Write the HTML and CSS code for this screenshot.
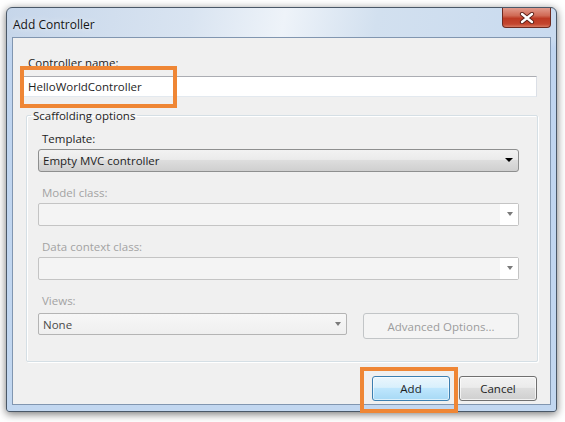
FILE: index.html
```html
<!DOCTYPE html>
<html lang="en">

<head>
    <meta charset="UTF-8">
    <meta name="viewport" content="width=device-width, initial-scale=1.0">
    <title>Add Controller</title>
    <link rel="stylesheet" href="styles.css">
</head>

<body>
    <div class="window">
        <div class="titlebar">
            <span class="title">Add Controller</span>
            <div class="close-btn">
                <svg width="16" height="12" viewBox="0 0 16 12">
                    <path d="M3 2 L13 10 M13 2 L3 10" stroke="#5a1e16" stroke-width="4.2" stroke-linecap="round" fill="none" />
                    <path d="M3 2 L13 10 M13 2 L3 10" stroke="#fff" stroke-width="2.4" stroke-linecap="round" fill="none" />
                </svg>
            </div>
        </div>

        <div class="client">
            <label class="name-label">Controller name:</label>
            <div class="textbox">HelloWorldController</div>

            <fieldset class="group">
                <legend>Scaffolding options</legend>

                <div class="field">
                    <label>Template:</label>
                    <div class="combo">Empty MVC controller<span class="arrow"></span></div>
                </div>

                <div class="field">
                    <label class="disabled">Model class:</label>
                    <div class="combo off"><span class="drop"><span class="arrow"></span></span></div>
                </div>

                <div class="field">
                    <label class="disabled">Data context class:</label>
                    <div class="combo off"><span class="drop"><span class="arrow"></span></span></div>
                </div>

                <div class="field">
                    <label class="disabled">Views:</label>
                    <div class="views-row">
                        <div class="combo views">None<span class="arrow"></span></div>
                        <div class="btn btn-off">Advanced Options...</div>
                    </div>
                </div>
            </fieldset>

            <div class="buttons">
                <div class="btn btn-default">Add</div>
                <div class="btn">Cancel</div>
            </div>
        </div>

        <!-- orange callouts -->
        <span class="callout callout-name"></span>
        <span class="callout callout-add"></span>
    </div>
</body>

</html>
```

FILE: styles.css
```css
body {
    background-color: #fff;
    font-family: "Open Sans", "Noto Sans", Arial, sans-serif;
    font-size: 11.5px;
    color: #1e1e1e;
    margin: 0;
    height: 422px;
}

.window {
    position: relative;
    margin: 7px 0 0 6px;
    width: 551px;
    padding: 0 5px 6px 5px;
    box-sizing: border-box;
    border: 1px solid #4a5868;
    border-radius: 6px 6px 3px 3px;
    background:
        linear-gradient(rgba(255, 255, 255, 0) 0%, rgba(255, 255, 255, 0) 8%, rgba(190, 212, 240, 0.9) 10%, #c2d7f0 100%),
        linear-gradient(100deg, #c6d6ea 0%, #d9e4f1 30%, #eef3f9 45%, #d2e0ef 60%, #c5d8ef 100%);
    box-shadow: 0 2px 8px rgba(0, 0, 0, 0.55);
}

.titlebar {
    height: 29px;
    display: flex;
    justify-content: space-between;
    align-items: flex-start;
}

.title {
    margin: 8px 0 0 1px;
    font-size: 12px;
    color: #151515;
    text-shadow: 0 0 6px rgba(255, 255, 255, 0.9);
}

.close-btn {
    width: 49px;
    height: 20px;
    box-sizing: border-box;
    border: 1px solid #6e2a20;
    border-top: none;
    border-radius: 0 0 4px 4px;
    background: linear-gradient(#e29a8c 0%, #d06a55 40%, #bd3a24 55%, #c4462f 85%, #d77a62 100%);
    display: flex;
    align-items: center;
    justify-content: center;
}

.client {
    background-color: #f0f0f0;
    border: 1px solid #8196b0;
    padding: 17px 13px 3px 10px;
}

.name-label {
    display: block;
    line-height: 15px;
    padding-left: 5px;
    margin-bottom: 6px;
}

.textbox {
    height: 21px;
    box-sizing: border-box;
    background-color: #fff;
    border: 1px solid #abadb3;
    border-left-color: #e2e3ea;
    border-right-color: #dbdfe6;
    border-bottom-color: #e3e9ef;
    padding: 2px 4px;
    line-height: 15px;
}

.group {
    margin: 11px 0 0 3px;
    padding: 8px 18px 22px 11px;
    border: 1px solid #d5dfe5;
    box-shadow: inset 1px 1px 0 #fff, 1px 1px 0 #fff;
    border-radius: 2px;
}

.group legend {
    margin-left: -7px;
    padding: 0 2px;
    line-height: 15px;
}

.field label {
    display: block;
    line-height: 15px;
    padding-left: 4px;
    margin-bottom: 3px;
}

.field + .field {
    margin-top: 13px;
}

label.disabled {
    color: #a3a3a3;
}

.combo {
    position: relative;
    height: 23px;
    box-sizing: border-box;
    border: 1px solid #8e8f8f;
    border-radius: 3px;
    background: linear-gradient(#f2f2f2 0%, #ebebeb 45%, #dddddd 50%, #cfcfcf 100%);
    padding: 3px 4px;
    line-height: 15px;
}

.arrow {
    position: absolute;
    right: 5px;
    top: 8px;
    width: 0;
    height: 0;
    border-left: 4px solid transparent;
    border-right: 4px solid transparent;
    border-top: 4px solid #000;
}

.combo.off {
    border-color: #c4c4c4;
    border-radius: 2px;
    background: #f4f4f4;
}

.drop {
    position: absolute;
    right: 0;
    top: 0;
    bottom: 0;
    width: 18px;
    background-color: #fff;
}

.drop .arrow,
.views .arrow {
    border-top-color: #7a7a7a;
    border-left-width: 3.5px;
    border-right-width: 3.5px;
    top: 8px;
}

.views-row {
    display: flex;
    align-items: flex-start;
    gap: 16px;
    margin-top: 5px;
}

.combo.views {
    width: 309px;
    height: 22px;
    border-color: #b4b4b4;
    border-radius: 2px;
    background: linear-gradient(#f7f7f7, #efefef);
    color: #4a4a4a;
}

.btn {
    height: 25px;
    width: 78px;
    box-sizing: border-box;
    border: 1px solid #707070;
    border-radius: 3px;
    background: linear-gradient(#f2f2f2 0%, #ebebeb 45%, #dddddd 50%, #cfcfcf 100%);
    box-shadow: inset 0 0 0 1px rgba(255, 255, 255, 0.7);
    display: flex;
    align-items: center;
    justify-content: center;
}

.btn-off {
    width: 156px;
    height: 26px;
    border-color: #c2c5c7;
    background: #f4f4f4;
    color: #9c9c9c;
    box-shadow: none;
}

.btn-default {
    border-color: #3c7fb1;
    background: linear-gradient(#eaf6fd 0%, #d9f0fc 45%, #bee6fd 50%, #a7d9f5 100%);
    box-shadow: inset 0 0 0 1px rgba(255, 255, 255, 0.6);
}

.buttons {
    display: flex;
    justify-content: flex-end;
    gap: 9px;
    margin-top: 14px;
}

.callout {
    position: absolute;
    border: 4px solid #ef8635;
    box-sizing: border-box;
}

.callout-name {
    left: 13px;
    top: 58px;
    width: 157px;
    height: 42px;
}

.callout-add {
    left: 353px;
    top: 359px;
    width: 98px;
    height: 46px;
}
```
